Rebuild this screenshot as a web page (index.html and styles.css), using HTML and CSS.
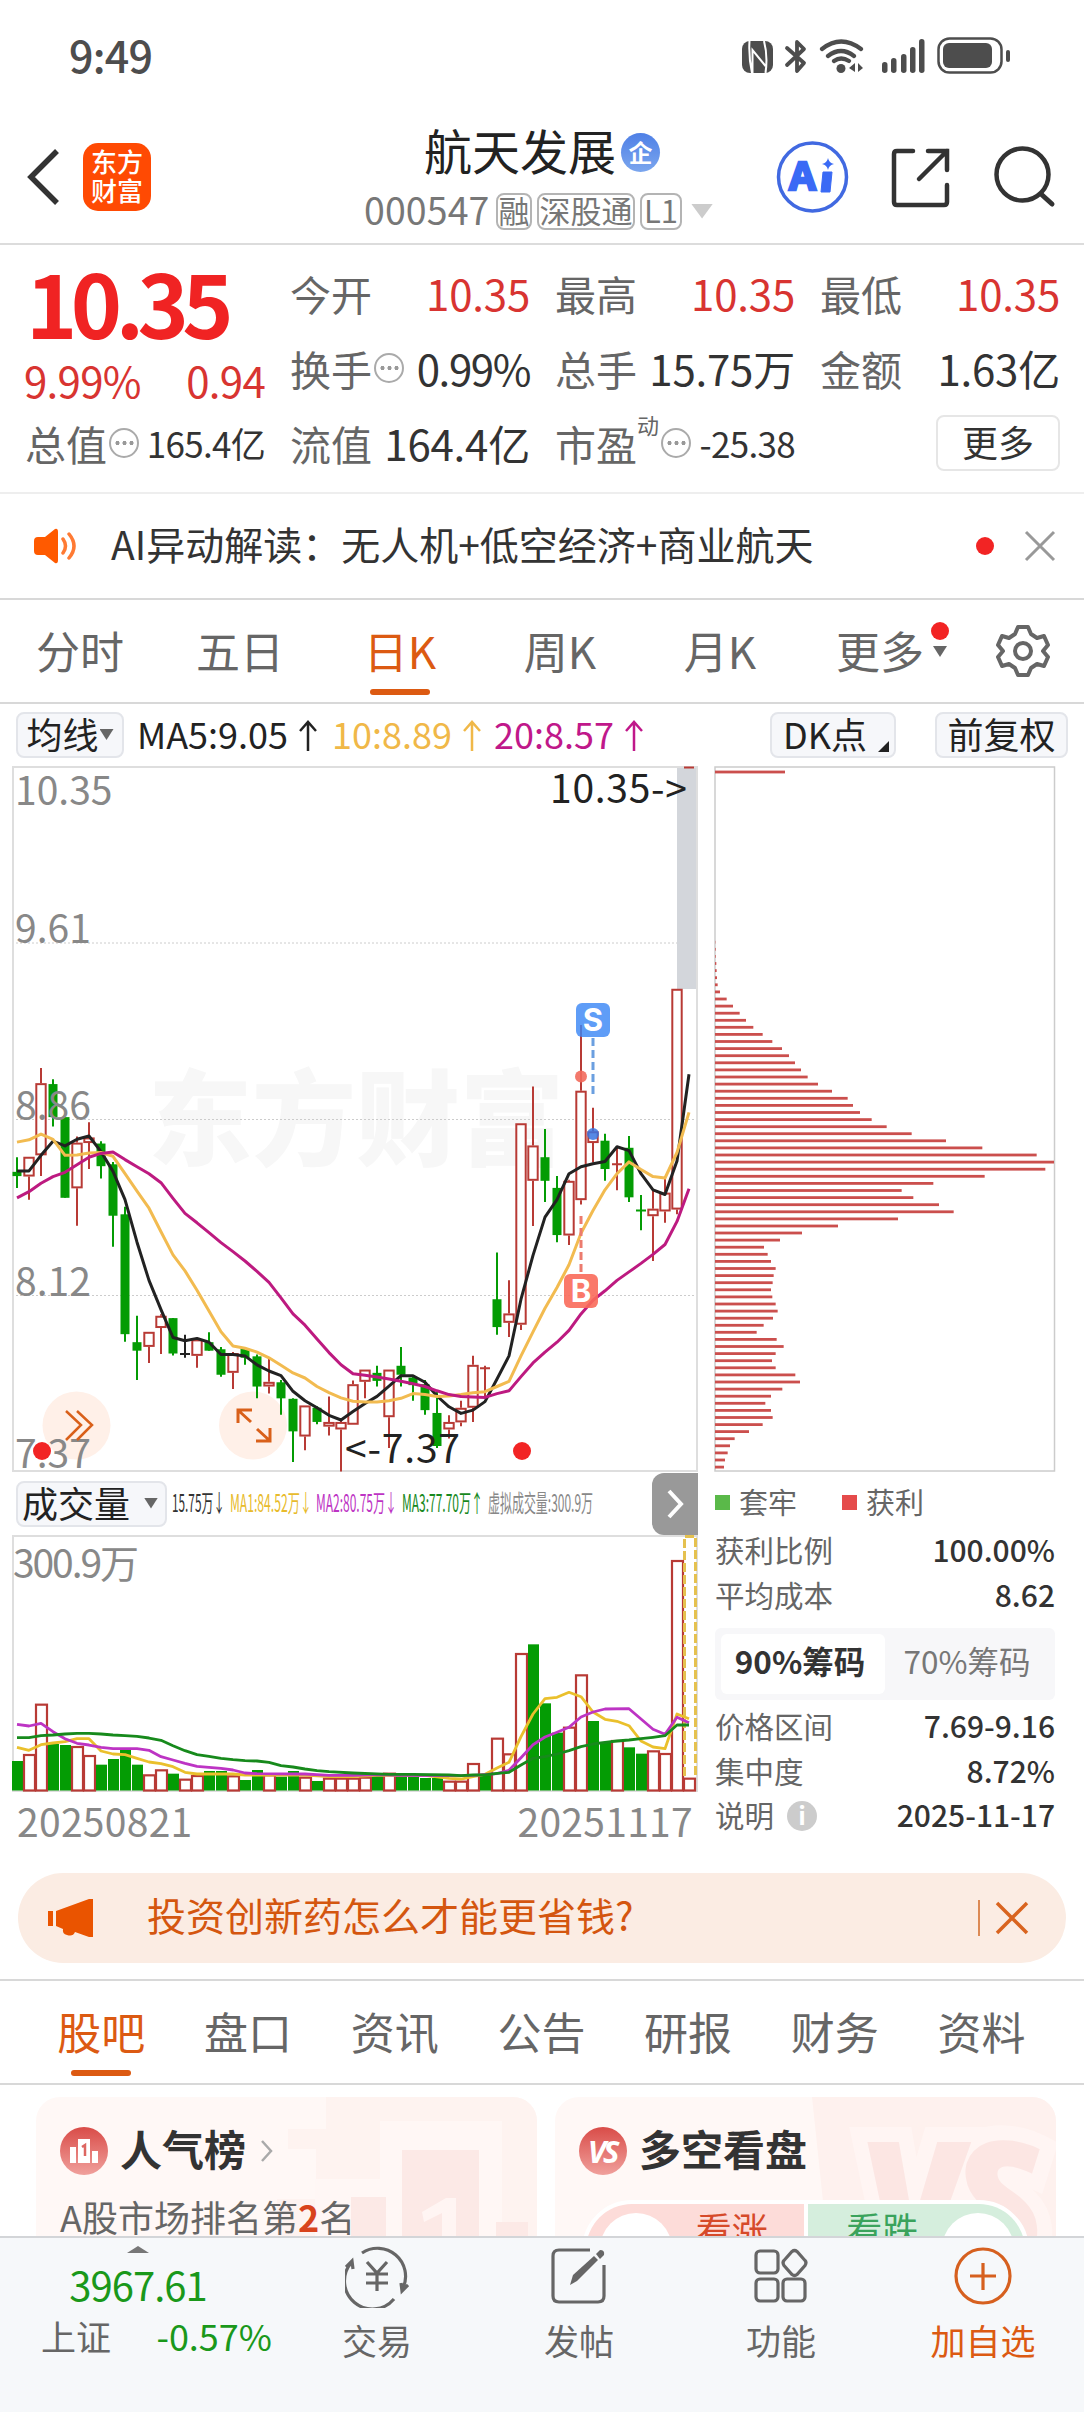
FILE: index.html
```html
<!DOCTYPE html>
<html lang="zh-CN">
<head>
<meta charset="utf-8">
<title>航天发展 000547</title>
<link rel="stylesheet" href="styles.css">
</head>
<body>
<div class="page">
  <div class="status">
    <span class="clock">9:49</span>
    <svg class="status-icons" width="272" height="42" viewBox="740 36 272 42">
      <g fill="#4d4d4d">
        <rect x="742" y="41" width="31" height="32" rx="8"/>
        <circle cx="841" cy="68.500" r="4.500"/>
        <rect x="882" y="62" width="5.500" height="11" rx="2.700"/><rect x="891" y="58" width="5.500" height="15" rx="2.700"/><rect x="901" y="54" width="5.500" height="19" rx="2.700"/><rect x="910" y="47" width="5.500" height="26" rx="2.700"/><rect x="919" y="39" width="5.500" height="34" rx="2.700"/>
        <rect x="943" y="43" width="49" height="25" rx="6"/><rect x="1006" y="50" width="4" height="12" rx="2"/>
        <path d="M855 63l-6 5 6 4zM858 72l5-4-5-5z"/>
      </g>
      <path d="M749.500 41q-1 16 2.500 32M752.500 73V50l13 16M764 41q4 15 1.500 32" fill="none" stroke="#fff" stroke-width="2"/>
      <g fill="none" stroke="#4d4d4d" stroke-width="4.200" stroke-linecap="round">
        <path d="M787 48l17 15-7 8V42l7 7-17 16" stroke-linejoin="round" stroke-width="3.800"/>
        <path d="M822 49q19-15 39 0M828 56q13-10 26 0M834 61q7-5 15 0"/>
        <rect x="938.500" y="38.500" width="63" height="34" rx="11" stroke-width="2.500"/>
      </g>
    </svg>
  </div>

  <header class="header">
    <svg class="back" width="36" height="60" viewBox="0 0 36 60"><path d="M32 4L6 30l26 26" fill="none" stroke="#333" stroke-width="5.500"/></svg>
    <div class="logo"><span>东方</span><span>财富</span></div>
    <div class="stock">
      <div class="stock-name"><h1>航天发展</h1><span class="qi">企</span></div>
      <div class="stock-code"><span class="code">000547</span><span class="tag">融</span><span class="tag">深股通</span><span class="tag tag-level">L1</span><i class="tri tri-light"></i></div>
    </div>
    <svg class="head-icons" width="290" height="80" viewBox="770 137 290 80" fill="none">
      <circle cx="812.500" cy="177" r="34" stroke="#4169e1" stroke-width="3.500"/>
      <text x="789" y="190" class="ai-mark">A</text>
      <path d="M823 172h9l-2 20h-9z" fill="#3a6af5" stroke="#3a6af5" stroke-linejoin="round"/>
      <path d="M828 158q1 5 6 6-5 1-6 6-1-5-6-6 5-1 6-6z" fill="#3a6af5"/>
      <path d="M913 151h-16q-3 0-3 3v48q0 3 3 3h47q3 0 3-3v-17M928 151h19v19M947 151l-28 28" stroke="#333" stroke-width="4.500" stroke-linecap="round"/>
      <circle cx="1022.500" cy="174.500" r="26" stroke="#333" stroke-width="4.500"/><path d="M1041 194l11 10" stroke="#333" stroke-width="5" stroke-linecap="round"/>
    </svg>
  </header>

  <section class="quote">
    <div class="price-block">
      <div class="price">10.35</div>
      <div class="change"><span>9.99%</span><span>0.94</span></div>
    </div>
    <div class="cell"><label>今开</label><b class="red">10.35</b></div>
    <div class="cell"><label>最高</label><b class="red">10.35</b></div>
    <div class="cell"><label>最低</label><b class="red">10.35</b></div>
    <div class="cell"><label>换手<i class="dots"></i></label><b class="pct">0.99%</b></div>
    <div class="cell"><label>总手</label><b>15.75万</b></div>
    <div class="cell"><label>金额</label><b>1.63亿</b></div>
    <div class="cell"><label>总值<i class="dots"></i></label><b class="small">165.4亿</b></div>
    <div class="cell"><label>流值</label><b>164.4亿</b></div>
    <div class="cell"><label>市盈<sup>动</sup><i class="dots"></i></label><b class="small">-25.38</b></div>
    <div class="cell cell-end"><span class="more">更多</span></div>
  </section>

  <section class="news">
    <svg width="46" height="36" viewBox="0 0 46 36"><path d="M5 9h7L22 1q3-1 3 3v28q0 4-3 3l-10-8H5q-4 0-4-4V13q0-4 4-4z" fill="#ff5a00"/><path d="M30 11q5 7 0 14M36 6q10 12 0 24" fill="none" stroke="#ff7a33" stroke-width="3.500" stroke-linecap="round"/></svg>
    <span class="news-text">AI异动解读：无人机+低空经济+商业航天</span>
    <i class="dot"></i>
    <svg class="close" width="32" height="32" viewBox="0 0 32 32"><path d="M2 2l28 28M30 2L2 30" stroke="#999" stroke-width="3"/></svg>
  </section>

  <nav class="periods">
    <a>分时</a><a>五日</a><a class="on">日K</a><a>周K</a><a>月K</a><a class="has-more">更多<i class="tri tri-dark"></i><i class="dot"></i></a>
    <svg class="gear" width="56" height="56" viewBox="-28 -28 56 56" fill="none" stroke="#666" stroke-width="4" stroke-linejoin="round"><path d="M-5-24H5L8-17 14-13 21-15 25-6 20 0 25 6 21 15 14 13 8 17 5 24H-5L-8 17-14 13-21 15-25 6-20 0-25-6-21-15-14-13-8-17z"/><circle r="8"/></svg>
  </nav>

  <div class="ma-bar">
    <span class="chip chip-ma">均线<i class="tri tri-dark"></i></span>
    <span class="ma ma-5">MA5:9.05<svg class="arrow" viewBox="0 0 20 32"><path d="M10 31V2M2 11l8-9 8 9"/></svg></span>
    <span class="ma ma-10">10:8.89<svg class="arrow" viewBox="0 0 20 32"><path d="M10 31V2M2 11l8-9 8 9"/></svg></span>
    <span class="ma ma-20">20:8.57<svg class="arrow" viewBox="0 0 20 32"><path d="M10 31V2M2 11l8-9 8 9"/></svg></span>
    <span class="chip chip-dk">DK点<i class="corner"></i></span>
    <span class="chip chip-adj">前复权</span>
  </div>

  <main class="charts">
    <div class="left">
      <svg id="kline" width="686" height="706" viewBox="12 766 686 706"></svg>
      <div class="vol-bar">
        <span class="chip chip-vol">成交量<i class="tri tri-dark"></i></span>
        <svg class="vol-legend" width="424" height="40" viewBox="170 1484 424 40">
          <text x="172" y="1512" textLength="53" lengthAdjust="spacingAndGlyphs" fill="#333">15.75万↓</text>
          <text x="230" y="1512" textLength="82" lengthAdjust="spacingAndGlyphs" fill="#e8bb2c">MA1:84.52万↓</text>
          <text x="316" y="1512" textLength="81" lengthAdjust="spacingAndGlyphs" fill="#bd34c4">MA2:80.75万↓</text>
          <text x="402" y="1512" textLength="81" lengthAdjust="spacingAndGlyphs" fill="#17891d">MA3:77.70万↑</text>
          <text x="488" y="1512" textLength="105" lengthAdjust="spacingAndGlyphs" fill="#888">虚拟成交量:300.9万</text>
        </svg>
        <span class="side-toggle"><svg width="18" height="30" viewBox="0 0 18 30"><path d="M3 2l12 13L3 28" fill="none" stroke="#fff" stroke-width="4"/></svg></span>
      </div>
      <svg id="volume" width="686" height="257" viewBox="12 1535 686 257"></svg>
      <div class="dates"><span>20250821</span><span>20251117</span></div>
    </div>
    <aside class="right">
      <svg id="chips" width="342" height="706" viewBox="714 766 342 706"></svg>
      <div class="legend"><i class="sq sq-green"></i><span>套牢</span><i class="sq sq-red"></i><span>获利</span></div>
      <dl class="stats"><div><dt>获利比例</dt><dd>100.00%</dd></div><div><dt>平均成本</dt><dd>8.62</dd></div></dl>
      <div class="segment"><b>90%筹码</b><span>70%筹码</span></div>
      <dl class="stats"><div><dt>价格区间</dt><dd>7.69-9.16</dd></div><div><dt>集中度</dt><dd>8.72%</dd></div><div><dt>说明<i class="info">i</i></dt><dd>2025-11-17</dd></div></dl>
    </aside>
  </main>

  <section class="banner">
    <svg width="48" height="42" viewBox="0 0 48 42" fill="#ea5400"><path d="M1 14h5v15H1zM9 14L42 2h4v38h-4l-14-5q-2 5-8 3-5-1-4-6l-7-3z"/></svg>
    <span class="banner-text">投资创新药怎么才能更省钱?</span>
    <i class="banner-sep"></i>
    <svg width="34" height="34" viewBox="0 0 34 34"><path d="M2 2l30 30M32 2L2 32" stroke="#d9641f" stroke-width="3.500"/></svg>
  </section>

  <nav class="tabs"><a class="on">股吧</a><a>盘口</a><a>资讯</a><a>公告</a><a>研报</a><a>财务</a><a>资料</a></nav>

  <section class="cards">
    <article class="card">
      <svg class="card-art" width="260" height="152" viewBox="277 2097 260 152"><path d="M326 2097h211v152H277v-50h39v-50h-28v-20h38z" fill="#fef3f0"/><path d="M380 2121h122v128H315v-70h65z" fill="#fff7f5"/><path d="M402 2150h77v99h-77zM351 2197h35v52h-35zM496 2222h32v27h-32z" fill="#fce9e6"/><path d="M422 2212l24-14h10v51h-14v-36l-18 9z" fill="#fff5f3"/></svg>
      <div class="card-head"><svg width="48" height="48" viewBox="-24 -24 48 48"><circle r="24" fill="url(#ball)"/><path d="M-14-4h6v16h-6zM-6-12H6v24H-6zM8 0h6v12H8z" fill="#fff"/><path d="M-2-4l3-2v11" fill="none" stroke="#dd6661" stroke-width="2.500"/></svg><h2>人气榜</h2><svg class="chev" width="14" height="24" viewBox="0 0 14 24"><path d="M2 2l9 10-9 10" fill="none" stroke="#aaa" stroke-width="2.500"/></svg></div>
      <p class="rank">A股市场排名第<b>2</b>名</p>
    </article>
    <article class="card">
      <svg class="card-art" width="250" height="152" viewBox="806 2097 250 152"><path d="M812 2097h244v152H828z" fill="#fef1ee"/><text transform="translate(872 2262) skewX(8)" class="art-vs">VS</text></svg>
      <div class="card-head"><svg width="48" height="48" viewBox="-24 -24 48 48"><circle r="24" fill="url(#ball)"/><text x="-1" y="12" class="vs">VS</text></svg><h2>多空看盘</h2></div>
      <div class="pill"><span class="up"><i></i>看涨</span><span class="down">看跌<i></i></span></div>
    </article>
    <svg width="0" height="0" class="defs"><defs><linearGradient id="ball" x1="0" y1="0" x2="0" y2="1"><stop offset="0" stop-color="#d94c48"/><stop offset="1" stop-color="#f0a09c"/></linearGradient></defs></svg>
  </section>

  <footer class="bottom">
    <div class="index"><i class="tri-up"></i><strong>3967.61</strong><div><span>上证</span><em>-0.57%</em></div></div>
    <a><svg viewBox="-32 -32 64 64"><path d="M-15-23A28 28 0 0 1 26 12M31 9l-6 6-1-8M17 23A28 28 0 0 1-26-13M-31-9l6-6 1 8"/><path d="M-10-14L0-3 10-14M0-3V15M-11-2h22M-11 7h22"/></svg>交易</a>
    <a><svg viewBox="-32 -32 64 64"><path d="M11-26H-20q-6 0-6 6V20q0 6 6 6H19q6 0 6-6V-11"/><path d="M-9 9l3-10L15-20l4 4L-2 5z" fill="#666" stroke="none"/><path d="M17-22l4-4q5 0 4 5l-4 4z" fill="#666" stroke="none"/></svg>发帖</a>
    <a><svg viewBox="-32 -32 64 64"><rect x="-25" y="-25" width="22" height="22" rx="4"/><rect x="-25" y="3" width="22" height="22" rx="4"/><rect x="2" y="3" width="22" height="22" rx="4"/><path d="M11-24.500q2.500-2 5 0l8 9q2 2 0 5l-8 9q-2.500 2-5 0l-8-9q-2-3 0-5z"/></svg>功能</a>
    <a class="on"><svg viewBox="-32 -32 64 64"><circle r="27"/><path d="M-13 0h26M0-13v27"/></svg>加自选</a>
  </footer>
</div>
<script src="charts.js"></script>
</body>
</html>
```
FILE: styles.css
```css
* { box-sizing: border-box; margin: 0; padding: 0; }
body { background: #fff; font-family: "Noto Sans CJK SC", "Noto Sans", sans-serif; color: #333; }
i, em { font-style: normal; }
.page { width: 1084px; height: 2412px; display: flex; flex-direction: column; overflow: hidden; }
.page > * { flex: none; }
.tri { display: inline-block; width: 14px; height: 11px; clip-path: polygon(0 0, 100% 0, 50% 100%); }
.tri-light { width: 22px; height: 15px; background: #ccc; }
.tri-dark { background: #666; }
.dot { display: block; width: 18px; height: 18px; border-radius: 50%; background: #f22424; }
.red { color: #d83431; }

.status { height: 112px; display: flex; justify-content: space-between; padding: 36px 72px 0 69px; }
.clock { font-size: 43px; line-height: 37px; font-weight: 500; color: #4d4d4d; letter-spacing: -.8px; }

.header { height: 133px; border-bottom: 2px solid #dcdcdc; display: flex; padding-left: 25px; }
.back { margin-top: 35px; }
.logo { margin: 31px 0 0 22px; width: 68px; height: 68px; border-radius: 15px; background: #ff4a03; color: #fff; font-size: 26px; line-height: 29px; font-weight: 500; display: flex; flex-direction: column; align-items: center; padding-top: 3px; }
.stock { margin-left: 213px; width: 406px; padding-top: 9px; }
.stock-name { display: flex; align-items: center; height: 56px; padding-left: 60px; }
.stock-name h1 { font-size: 48px; font-weight: 400; line-height: 56px; color: #222; }
.qi { margin: 6px 0 0 5px; width: 39px; height: 39px; border-radius: 50%; background: linear-gradient(#4f80e6, #7ba6ee); color: #fff; font-size: 24px; line-height: 37px; font-weight: 700; text-align: center; }
.stock-code { display: flex; align-items: center; margin-top: 15px; color: #777; height: 38px; }
.code { font-size: 37.500px; line-height: 34px; height: 38px; width: 132px; letter-spacing: .1px; }
.tag { height: 37px; border: 2px solid #b4b4b4; border-radius: 8px; font-size: 31px; line-height: 29px; padding: 0 .5px; margin-right: 5px; }
.tag-level { padding: 0 2px; }
.stock-code .tri { margin-left: 4px; }
.head-icons { margin-top: 25px; }
.ai-mark { font: 700 39px "Open Sans", sans-serif; fill: #3a6af5; stroke: #3a6af5; stroke-width: 2.5; }

.quote { height: 249px; padding: 18px 24px 0 26px; display: grid; grid-template-columns: repeat(4, 239px); grid-template-rows: 75px 75px 74px; column-gap: 26px; border-bottom: 2px solid #eee; }
.price-block { grid-row: span 2; margin-top: -9px; }
.price { font-size: 87px; line-height: 94px; font-weight: 700; color: #f02323; letter-spacing: -6.500px; height: 97px; }
.change { display: flex; justify-content: space-between; color: #d83431; font-size: 42px; line-height: 56px; letter-spacing: -.7px; padding-top: 1px; margin-left: -2px; }
.cell { display: flex; justify-content: space-between; align-items: center; line-height: 60px; padding-bottom: 15px; }
.cell label { font-size: 41px; color: #666; display: flex; align-items: center; margin-left: -1px; }
.cell b { font-weight: 400; font-size: 42px; letter-spacing: -.2px; }
.cell b.pct { letter-spacing: -1.4px; }
.cell b.small { font-size: 35px; letter-spacing: -.7px; }
.cell sup { font-size: 22px; line-height: 24px; margin-bottom: 38px; }
.dots { width: 30px; height: 30px; margin: 0 2px; border: 2px solid #aaa; border-radius: 50%; background: radial-gradient(circle at 50% 50%, #999 1.800px, transparent 2.300px) center / 7px 30px; background-clip: content-box; padding: 0 2.500px; }
.cell-end { justify-content: flex-end; }
.more { width: 124px; height: 56px; border: 2px solid #e6e6e6; border-radius: 8px; text-align: center; font-size: 36px; line-height: 48px; }

.news { height: 106px; border-bottom: 2px solid #d8d8d8; display: flex; align-items: center; padding: 0 28px 1px 33px; }
.news-text { font-size: 39px; margin-left: 32px; flex: 1; line-height: 50px; padding-bottom: 5px; }
.news .close { margin-left: 30px; }

.periods { height: 104px; border-bottom: 2px solid #d8d8d8; display: grid; grid-template-columns: repeat(6, 160px) 1fr; padding-top: 18px; text-align: center; color: #666; font-size: 44px; line-height: 64px; }
.on { position: relative; }
.periods .on, .tabs .on { color: #dc5a12; }
.periods .on::after, .tabs .on::after { content: ""; position: absolute; left: 50%; margin-left: -30px; bottom: 7px; width: 60px; height: 6px; border-radius: 3px; background: #dc5a12; }
.has-more { position: relative; }
.has-more .tri { position: absolute; right: 13px; top: 28px; }
.has-more .dot { position: absolute; right: 11px; top: 4px; }
.gear { margin: 5px 0 0 35px; }

.ma-bar { height: 62px; display: flex; align-items: center; padding: 0 16px; font-size: 35px; line-height: 42px; }
.chip { height: 46px; border: 2px solid #e3e5ea; border-radius: 8px; background: #f6f7fa; font-size: 36px; line-height: 36px; padding-bottom: 4px; color: #222; display: flex; align-items: center; justify-content: center; }
.chip-ma { width: 108px; }
.chip-ma .tri { margin: 3px 0 0 1px; }
.chip-dk { width: 126px; margin-left: auto; padding-right: 16px; position: relative; }
.corner { position: absolute; right: 5px; bottom: 4px; width: 11px; height: 11px; background: #222; clip-path: polygon(100% 0, 100% 100%, 0 100%); }
.chip-adj { width: 133px; margin-left: 39px; }
.ma { display: flex; align-items: center; font-size: 36px; line-height: 38px; padding-bottom: 5px; }
.arrow { width: 20px; height: 32px; margin: 6px 0 0 10px; fill: none; stroke: currentColor; stroke-width: 2.5; }
.ma-5 { margin-left: 13px; color: #222; }
.ma-10 { margin-left: 14px; color: #f0b848; }
.ma-20 { margin-left: 12px; color: #c0188a; }

.charts { display: grid; grid-template-columns: 686px 342px; column-gap: 16px; padding-left: 12px; height: 1107px; }
.charts svg { display: block; }
.axis { font-size: 39px; fill: #888; }
.mark { font-size: 39px; fill: #222; }
.watermark { font-size: 104px; font-weight: 900; fill: #f7f7f7; }
.badge { font: 700 31px "Inter", sans-serif; fill: #fff; text-anchor: middle; }
.vol-bar { height: 63px; display: flex; align-items: center; padding-left: 4px; }
.chip-vol { width: 151px; padding-right: 3px; }
.chip-vol .tri { margin: 3px 0 0 14px; }
.vol-legend { margin-left: 3px; font-size: 24px; }
.side-toggle { margin-left: auto; width: 46px; height: 62px; border-radius: 12px 0 0 12px; background: #999; display: flex; align-items: center; justify-content: center; }
.dates { display: flex; justify-content: space-between; padding: 0 5px; font-size: 39px; line-height: 57px; color: #888; letter-spacing: .3px; }
.legend { display: flex; align-items: center; height: 56px; padding-top: 4px; font-size: 29px; color: #666; }
.legend span { padding-bottom: 2px; }
.sq { width: 15px; height: 15px; margin: 0 9px 0 1px; }
.sq-green { background: #5ab949; }
.sq-red { background: #e54b4b; margin-left: 45px; }
.stats { font-size: 29.5px; line-height: 44px; color: #666; padding-right: 1px; }
.stats div { display: flex; justify-content: space-between; height: 44.500px; padding: 0 0 2px 1px; }
.stats dt { display: flex; align-items: center; }
.stats dd { color: #333; font-weight: 500; font-size: 30px; line-height: 42px; }
.info { width: 30px; height: 30px; border-radius: 50%; background: #ccc; color: #fff; font-size: 25px; line-height: 26px; font-weight: 700; text-align: center; margin: 4px 0 0 13px; }
.segment { height: 72px; margin: 11px 1px 4px; background: #f7f7f9; border-radius: 6px; display: grid; grid-template-columns: 164px 1fr; padding: 6px; font-size: 31.500px; line-height: 53px; text-align: center; color: #777; }
.segment b { background: #fff; border-radius: 6px; color: #333; padding-right: 6px; }

.banner { margin: 0 18px 16px; height: 90px; border-radius: 45px; background: #fbece3; color: #d4560f; display: flex; align-items: center; padding: 0 37px 0 29px; }
.banner-text { font-size: 39px; line-height: 50px; margin-left: 52px; flex: 1; padding-bottom: 8px; }
.banner-sep { width: 2px; height: 36px; background: #dc8a55; margin-right: 15px; }

.tabs { height: 106px; border-top: 2px solid #d8d8d8; border-bottom: 2px solid #d8d8d8; display: grid; grid-template-columns: repeat(7, 146.700px); padding-left: 28px; text-align: center; font-size: 44px; line-height: 100px; color: #666; }

.cards { height: 151px; display: flex; gap: 18px; padding: 12px 28px 0 36px; overflow: hidden; }
.card { position: relative; width: 501px; height: 200px; border-radius: 24px 24px 0 0; overflow: hidden; background: #fff8f6; padding: 29px 24px 0; flex: none; }
.card-art { position: absolute; right: 0; top: 0; }
.art-vs { font: italic 800 168px "Open Sans", sans-serif; fill: #fce6e3; stroke: #fff5f3; stroke-width: 30; paint-order: stroke; letter-spacing: -14px; }
.card-head { position: relative; display: flex; align-items: center; height: 50px; }
.card h2 { font-size: 42px; line-height: 50px; margin-left: 12px; font-weight: 700; padding-bottom: 6px; }
.chev { margin-left: 14px; }
.vs { font: italic 700 31px "Open Sans", sans-serif; fill: #fff; text-anchor: middle; letter-spacing: -3px; }
.rank { position: relative; font-size: 36px; line-height: 50px; color: #666; margin-top: 15px; }
.rank b { color: #d8431c; }
.pill { position: relative; display: grid; grid-template-columns: 1fr 1fr; column-gap: 4px; border: 4px solid #fff; border-radius: 50px; width: 447px; height: 100px; margin: 24px 0 0 3px; overflow: hidden; font-size: 36px; line-height: 48px; background: #fff; }
.pill span { display: flex; justify-content: center; gap: 24px; }
.pill i { width: 72px; height: 72px; border-radius: 50%; background: #fff; margin-top: 9px; }
.up { background: #fddcd9; color: #d64a2a; padding-right: 22px; }
.down { background: #d5eedd; color: #3aa35c; padding-left: 28px; }

.bottom { height: 176px; border-top: 2px solid #d3d5d8; background: #f6f8fa; display: flex; padding-top: 6px; }
.index { width: 276px; display: flex; flex-direction: column; align-items: center; }
.tri-up { width: 22px; height: 7px; margin-top: 2px; background: #777; clip-path: polygon(50% 0, 100% 100%, 0 100%); }
.index strong { font-size: 40px; line-height: 62px; height: 61px; font-weight: 400; color: #1a981a; letter-spacing: -1px; }
.index div { width: 231px; margin-left: 37px; display: flex; justify-content: space-between; font-size: 35px; line-height: 43px; color: #666; }
.index em { color: #1a981a; font-size: 36px; line-height: 42px; }
.bottom a { width: 202px; display: flex; flex-direction: column; align-items: center; font-size: 35px; line-height: 64px; color: #666; }
.bottom a svg { width: 64px; height: 64px; fill: none; stroke: #666; stroke-width: 3.2; }
.bottom a.on { color: #dc5a12; }
.bottom a.on svg { stroke: #d6601f; }
```
FILE: charts.js
```js
const RED = '#b83a35', GREEN = '#049c04';
const cx = i => 17 + 12 * i;
const line = (pts, f, color, w) =>
  `<polyline fill="none" stroke="${color}" stroke-width="${w}" stroke-linejoin="round" points="${pts.map(([i, v]) => cx(i) + ',' + f(v).toFixed(1)).join(' ')}"/>`;
const series = values => values.map((v, i) => [i, v]);

// Candles: direction, high, body top, body bottom, low (in plot units, 15 = top edge, 1507 = bottom edge)
const py = v => 767 + (v - 15) * 704 / 1492;
const candles = `g 842 873 882 907|r 841 841 883 932|r 653 685 838 882|g 677 687 757 777|g 757 757 928 928|r 798 811 908 987|r 768 800 812 867|g 808 813 861 887|g 852 857 966 1032|g 947 963 1217 1233|g 1178 1234 1252 1314|r 1212 1212 1244 1278|r 1175 1178 1204 1259|g 1183 1183 1258 1262|k 1218 1259 1259 1267|r 1226 1228 1263 1288|g 1213 1234 1252 1252|g 1244 1249 1303 1307|r 1255 1257 1299 1333|g 1244 1248 1267 1282|g 1260 1264 1328 1353|r 1268 1318 1328 1343|g 1314 1319 1353 1388|g 1353 1354 1423 1488|r 1368 1368 1434 1463|g 1370 1373 1403 1408|r 1349 1403 1413 1432|r 1400 1403 1419 1508|r 1315 1323 1409 1409|r 1292 1292 1318 1353|g 1284 1299 1316 1328|r 1292 1292 1393 1458|g 1244 1284 1303 1328|g 1305 1309 1325 1358|g 1314 1323 1378 1388|g 1338 1384 1454 1458|r 1389 1403 1419 1438|r 1358 1373 1404 1412|r 1263 1282 1373 1403|r 1284 1289 1293 1353|g 1044 1143 1202 1218|r 1103 1173 1193 1223|r 770 770 1197 1208|r 692 817 892 988|g 782 842 892 937|g 882 907 1007 1022|r 890 892 1008 1028|r 562 701 933 942|r 737 787 812 853|g 792 807 867 892|r 820 857 857 912|g 797 822 927 937|g 922 955 955 997|r 912 951 967 1062|r 885 917 957 981|r 485 485 953 963|r 15 16 16 17`.split('|').map(s => s.split(' '));
const ma5 = [871,871,838,808,818,804,797,830,872,932,1022,1103,1165,1224,1231,1226,1234,1260,1260,1263,1282,1295,1305,1338,1358,1373,1389,1399,1381,1364,1349,1327,1305,1305,1319,1348,1371,1385,1378,1360,1312,1263,1143,1050,969,932,877,862,856,851,820,828,877,911,921,850,666];
const ma10 = [810,805,793,804,838,837,833,832,840,877,914,950,1000,1049,1083,1124,1168,1212,1242,1247,1255,1267,1283,1299,1310,1328,1341,1352,1359,1361,1361,1358,1353,1343,1345,1349,1348,1345,1341,1339,1328,1317,1263,1212,1162,1118,1070,1003,955,911,877,852,868,883,886,832,747];
const ma20 = [928,915,897,883,874,858,842,834,831,847,862,877,896,929,961,981,1002,1023,1042,1062,1084,1107,1140,1174,1198,1227,1256,1282,1301,1304,1308,1312,1317,1322,1328,1337,1345,1349,1350,1351,1343,1337,1307,1278,1255,1234,1209,1174,1145,1125,1103,1085,1067,1048,1027,978,909];

let k = '<rect x="12" y="766" width="686" height="706" fill="#fff"/><text x="148" y="1158" class="watermark">东方财富</text>';
for (const y of [943, 1119.5, 1295.5]) k += `<path d="M12 ${y}H697" stroke="#ccc" stroke-dasharray="2 2"/>`;
k += '<rect x="677" y="767" width="20" height="222" fill="#d3d6db"/><rect x="13" y="767" width="684" height="704" fill="none" stroke="#dedede" stroke-width="2"/>';
k += '<circle cx="76.500" cy="1425.500" r="34" fill="#fff0e8"/><circle cx="253" cy="1425.500" r="34" fill="#fff0e8"/>';
candles.forEach(([d, ...v], i) => {
  const x = cx(i), [h, t, b, l] = v.map(n => py(+n));
  const c = d === 'r' ? RED : d === 'g' ? GREEN : '#222';
  if (b - t < 2.5) k += `<path d="M${x} ${h}V${l}M${x - 5} ${t}h10" stroke="${c}" stroke-width="2"/>`;
  else if (d === 'g') k += `<path d="M${x} ${h}V${l}" stroke="${c}" stroke-width="2"/><rect x="${x - 4.5}" y="${t}" width="9" height="${b - t}" fill="${c}"/>`;
  else k += `<path d="M${x} ${h}V${t}M${x} ${b}V${l}" stroke="${c}" stroke-width="2"/><rect x="${x - 4.7}" y="${t + 1}" width="9.400" height="${Math.max(1, b - t - 2)}" fill="#fff" stroke="${c}" stroke-width="2"/>`;
});
k += line(series(ma5), py, '#222', 3) + line(series(ma10), py, '#f2bb50', 3) + line(series(ma20), py, '#bd1a80', 3);
[['10.35', 805], ['9.61', 943], ['8.86', 1120], ['8.12', 1296], ['7.37', 1468]].forEach(([t, y]) => k += `<text x="15" y="${y}" class="axis">${t}</text>`);
k += `<text x="550" y="803" class="mark" textLength="137">10.35-&gt;</text><text x="345" y="1463" class="mark" textLength="115">&lt;-7.37</text>
<path d="M593 1038V1097" stroke="#6b9fe0" stroke-width="3" stroke-dasharray="8 4"/><path d="M581 1216V1274" stroke="#ec7b6e" stroke-width="3" stroke-dasharray="8 4"/>
<rect x="576" y="1003" width="34" height="34" rx="6" fill="#3c87f5" fill-opacity=".82"/><text x="593" y="1031" class="badge">S</text>
<rect x="564" y="1274" width="34" height="34" rx="6" fill="#f96a5a" fill-opacity=".9"/><text x="581" y="1302" class="badge">B</text>
<circle cx="581" cy="1076.500" r="6" fill="#f26a5c" fill-opacity=".9"/><circle cx="593" cy="1134" r="6" fill="#3a74e0" fill-opacity=".85"/>
<path d="M66 1411l15 14-15 15M77 1411l15 14-15 15" fill="none" stroke="#d9601a" stroke-width="2.500"/>
<path d="M238 1423v-13h14M239 1411l12 11M270 1428v13h-14M269 1440l-12-11" fill="none" stroke="#d9601a" stroke-width="3"/>
<circle cx="42" cy="1451" r="9" fill="#f22424"/><circle cx="522" cy="1451" r="9" fill="#f22424"/>`;
document.getElementById('kline').innerHTML = k;

// Volume bars: direction + bar top (3 units per pixel, baseline 990)
const vy = v => 1460 + v / 3;
const vols = 'g903 r882 r731 g852 g855 r858 r885 g914 g897 g869 g914 r943 r928 g941 r956 r945 g933 g933 r946 g960 g930 r943 g950 g933 r950 g963 r953 r953 r953 r950 g945 r938 g945 g950 g954 g954 r962 r962 r909 g945 r833 r880 r579 g553 g730 g818 r800 r643 g783 g848 r840 g862 g881 r871 r879 r300 r953'.split(' ');
const v5 = [[0,862],[1,871],[2,854],[3,849],[4,845],[5,836],[6,836],[7,873],[8,882],[9,884],[10,895],[11,906],[12,911],[13,920],[14,937],[15,942],[18,942],[19,945],[24,945],[26,950],[28,950],[30,946],[34,946],[36,955],[37,957],[38,950],[39,943],[40,924],[41,907],[42,830],[43,762],[44,716],[45,712],[46,697],[47,710],[48,756],[49,778],[50,784],[51,797],[52,843],[53,861],[54,866],[55,762],[56,776]];
const v10 = [[0,793],[1,798],[2,790],[3,815],[4,836],[5,850],[6,855],[7,862],[8,866],[10,866],[11,871],[12,890],[13,900],[14,910],[15,919],[16,922],[17,925],[18,930],[19,939],[20,941],[24,942],[26,946],[28,946],[30,944],[32,946],[36,947],[38,946],[40,941],[41,931],[42,893],[43,854],[44,831],[45,817],[46,802],[47,771],[48,756],[49,747],[51,746],[52,777],[53,808],[54,823],[55,772],[56,788]];
const v20 = [[0,833],[1,833],[2,827],[3,825],[4,822],[5,820],[6,820],[7,822],[8,825],[9,827],[10,829],[11,834],[12,841],[13,857],[14,872],[15,884],[16,889],[17,895],[18,899],[19,902],[20,903],[21,907],[22,917],[23,921],[24,927],[25,932],[26,935],[28,939],[31,943],[33,943],[36,945],[37,947],[38,945],[39,945],[40,940],[41,937],[42,915],[43,895],[44,890],[45,882],[46,872],[47,860],[48,852],[49,847],[50,843],[51,840],[52,836],[53,832],[54,827],[55,795],[56,795]];
let s = '<rect x="13" y="1536" width="684" height="255" fill="#fff" stroke="#dedede" stroke-width="2"/>';
vols.forEach((b, i) => {
  const t = vy(+b.slice(1)), x = cx(i);
  s += b[0] === 'g' ? `<rect x="${x - 5}" y="${t}" width="11" height="${1790.5 - t}" fill="${GREEN}"/>`
    : `<rect x="${x - 5}" y="${t + 1}" width="11" height="${1789.5 - t}" fill="#fff" stroke="${RED}" stroke-width="2.200"/>`;
});
s += '<path d="M684.500 1776V1536.500H695.500V1776" fill="none" stroke="#e5c14f" stroke-width="3" stroke-dasharray="9 3"/>';
s += line(v5, vy, '#eac02c', 2.8) + line(v10, vy, '#bd34c4', 2.8) + line(v20, vy, '#178a1c', 2.8);
s += '<text x="13" y="1578" class="axis" textLength="126">300.9万</text>';
document.getElementById('volume').innerHTML = s;

// Chip distribution: bar lengths by price level, 3 units per pixel
const levels = { 0: 210 };
[1,2,2,4,5,6,8,15,35,54,74,93,115,143,172,201,222,240,258,278,309,351,398,414,435,470,515,590,693,802,965,1017,991,809,655,560,595,672,716,549,369,261,195,147,158,168,182,176,173,168,172,182,188,174,146,125,185,206,182,171,182,241,255,202,168,151,168,173,143,102,59,45,38,30,27].forEach((n, j) => levels[24 + j] = n);
let c = '<rect x="715" y="767" width="339.500" height="704" fill="#fff" stroke="#ccc" stroke-width="1.500"/>';
for (const j in levels) c += `<rect x="715" y="${(770.6 + j * 7.093).toFixed(1)}" width="${levels[j] / 3}" height="2.800" fill="#cb4f4d"/>`;
document.getElementById('chips').innerHTML = c;
```
